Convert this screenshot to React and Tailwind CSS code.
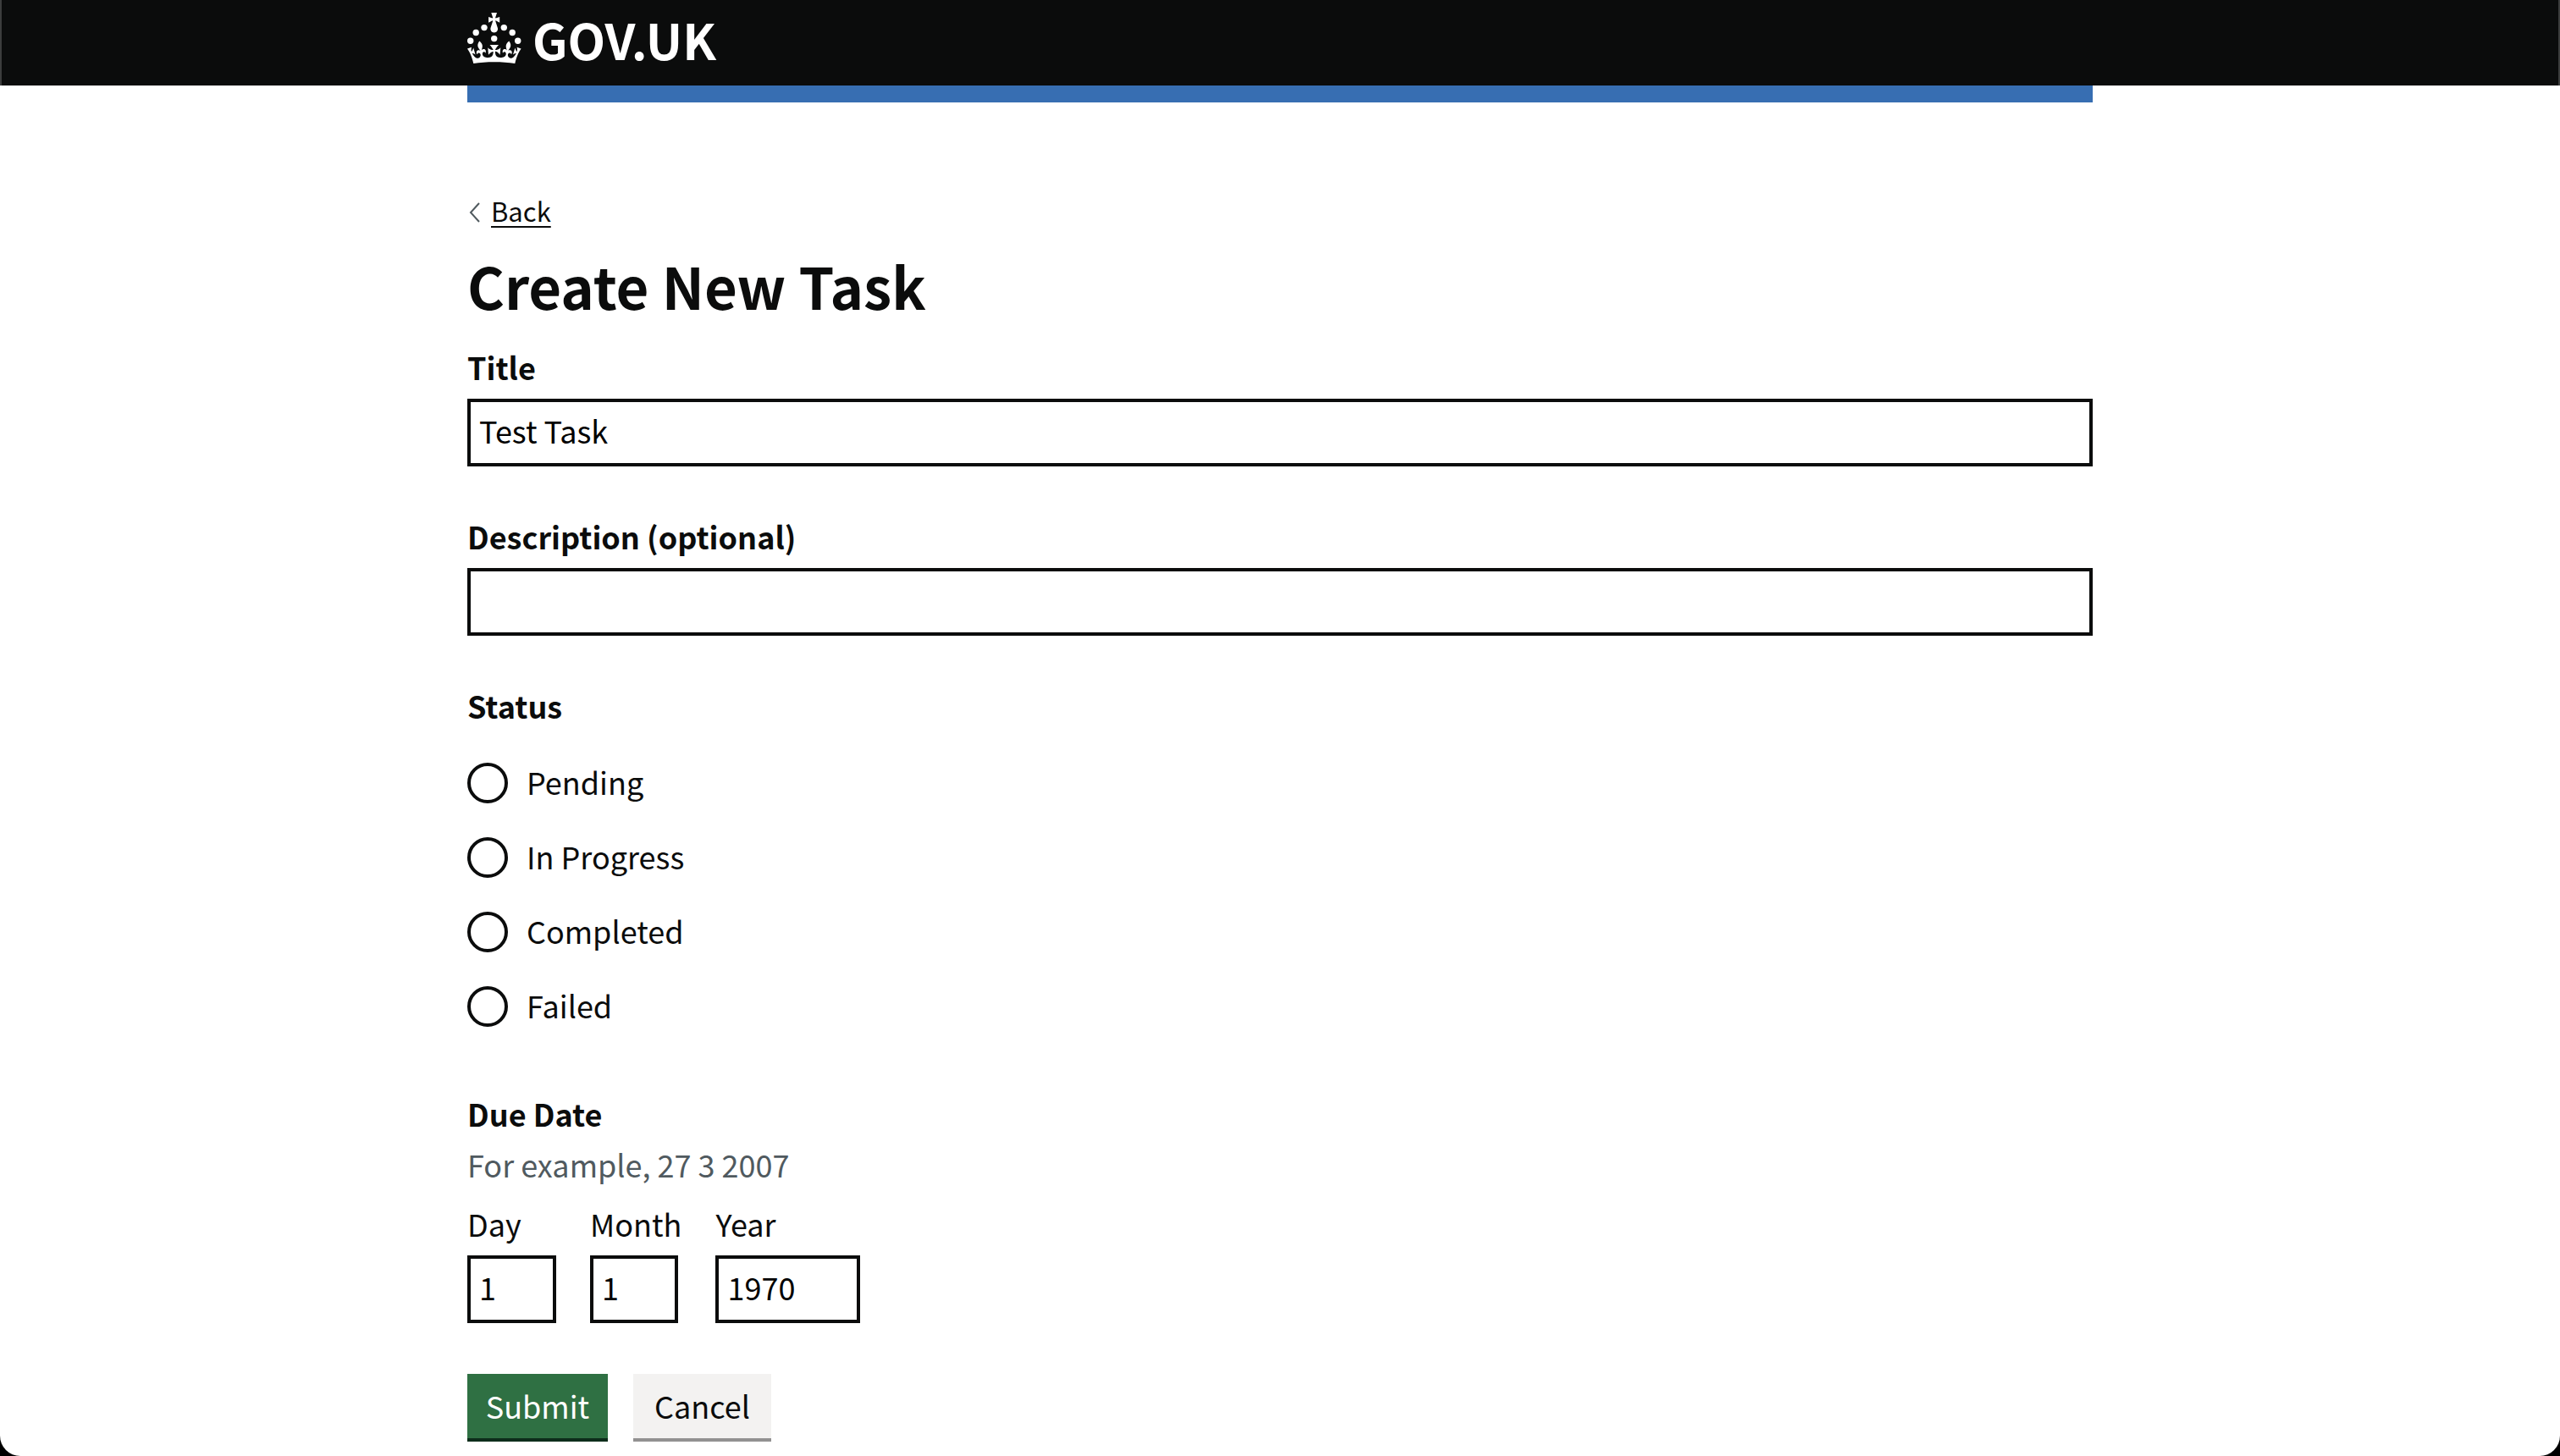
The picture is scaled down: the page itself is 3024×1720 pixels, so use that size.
import React from "react";

const STATUSES = ["Pending", "In Progress", "Completed", "Failed"];

const DATE_PARTS = [
  { id: "day", label: "Day", value: "1", width: "w-[105px]" },
  { id: "month", label: "Month", value: "1", width: "w-[104px]" },
  { id: "year", label: "Year", value: "1970", width: "w-[171px]" },
];

const inputClass =
  "block h-20 appearance-none rounded-none border-4 border-[#0b0c0c] bg-white px-2.5 pb-1.5 text-[36px] text-black outline-none focus:ring-4 focus:ring-[#ffdd00]";

const headingClass = "block text-[36px] leading-[50px] font-bold";

function Crown() {
  return (
    <svg viewBox="0 0 64 60" className="h-15 w-16 shrink-0 fill-white" aria-hidden="true">
      <circle cx="20" cy="17.6" r="3.7" />
      <circle cx="10.2" cy="23.5" r="3.7" />
      <circle cx="3.7" cy="33.2" r="3.7" />
      <circle cx="31.7" cy="30.6" r="3.7" />
      <circle cx="43.3" cy="17.6" r="3.7" />
      <circle cx="53.2" cy="23.5" r="3.7" />
      <circle cx="59.7" cy="33.2" r="3.7" />
      <path d="M33.1,9.8c.2-.1.3-.3.5-.5l4.6,2.4v-6.8l-4.6,1.5c-.1-.2-.3-.3-.5-.5l1.9-5.9h-6.7l1.9,5.9c-.2.1-.3.3-.5.5l-4.6-1.5v6.8l4.6-2.4c.1.2.3.3.5.5l-2.6,8c-.9,2.8,1.2,5.7,4.1,5.7h0c3,0,5.1-2.9,4.1-5.7l-2.6-8ZM37,37.9s-3.4,3.8-4.1,6.1c2.2,0,4.2-.5,6.4-2.8l-.7,8.5c-2-2.8-4.4-4.1-5.7-3.8.1,3.1.5,6.7,5.8,7.2,3.7.3,6.7-1.5,7-3.8.4-2.6-2-4.3-3.7-1.6-1.4-4.5,2.4-6.1,4.9-3.2-1.9-4.5-1.8-7.7,2.4-10.9,3,4,2.6,7.3-1.2,11.1,2.4-1.3,6.2,0,4,4.6-1.2-2.8-3.7-2.2-4.2.2-.3,1.7.7,3.7,3,4.2,1.9.3,4.7-.9,7-5.9-1.3,0-2.4.7-3.9,1.7l2.4-8c.6,2.3,1.4,3.7,2.2,4.5.6-1.6.5-2.8,0-5.3l5,1.8c-2.6,3.6-5.2,8.7-7.3,17.5-7.4-1.1-15.7-1.7-24.5-1.7h0c-8.8,0-17.1.6-24.5,1.7-2.1-8.9-4.7-13.9-7.3-17.5l5-1.8c-.5,2.5-.6,3.7,0,5.3.8-.8,1.6-2.3,2.2-4.5l2.4,8c-1.5-1-2.6-1.7-3.9-1.7,2.3,5,5.2,6.2,7,5.9,2.3-.4,3.3-2.4,3-4.2-.5-2.4-3-3.1-4.2-.2-2.2-4.6,1.6-6,4-4.6-3.7-3.7-4.2-7.1-1.2-11.1,4.2,3.2,4.3,6.4,2.4,10.9,2.5-2.8,6.3-1.3,4.9,3.2-1.8-2.7-4.1-1-3.7,1.6.3,2.3,3.3,4.1,7,3.8,5.4-.5,5.7-4.2,5.8-7.2-1.3-.2-3.7,1-5.7,3.8l-.7-8.5c2.2,2.3,4.2,2.7,6.4,2.8-.7-2.3-4.1-6.1-4.1-6.1h10.6,0Z" />
    </svg>
  );
}

function Header() {
  return (
    <header>
      <div className="border-x-2 border-[#3c3d3d] bg-[#0b0c0c]">
        <div className="mx-auto max-w-[1920px] pt-[15px] pb-6">
          <a href="#home" className="flex w-fit items-start gap-[13px] text-white">
            <Crown />
            <span className="text-[58px] leading-[62px] font-bold">GOV.UK</span>
          </a>
        </div>
      </div>
      <div className="mx-auto h-5 max-w-[1920px] bg-[#376eb2]" />
    </header>
  );
}

function TextField({ id, label, value }) {
  return (
    <div className="mb-[57px]">
      <label htmlFor={id} className={headingClass}>
        {label}
      </label>
      <input id={id} name={id} type="text" defaultValue={value} className={`${inputClass} mt-[13px] w-full`} />
    </div>
  );
}

export default function App() {
  return (
    <div className="bg-black">
      <div className="min-h-screen overflow-hidden rounded-b-3xl bg-white font-['Noto_Sans_CJK_SC','Noto_Sans',sans-serif] text-[#0b0c0c]">
        <Header />
        <main className="mx-auto max-w-[1920px] pt-[108px]">
          <a href="#back" className="flex w-fit items-center gap-[13px] text-[31px] leading-10">
            <svg
              viewBox="0 0 15 24"
              className="mt-1 h-6 w-[15px] fill-none stroke-[#505a5f] stroke-2"
              aria-hidden="true"
            >
              <path d="M14 1 L4 12 L14 23" />
            </svg>
            <span className="underline decoration-2 underline-offset-[5px] [text-decoration-skip-ink:none]">Back</span>
          </a>

          <h1 className="mt-7 mb-[31px] text-[67px] leading-20 font-bold">Create New Task</h1>

          <form onSubmit={(event) => event.preventDefault()}>
            <TextField id="title" label="Title" value="Test Task" />
            <TextField id="description" label="Description (optional)" value="" />

            <fieldset className="mb-[77px]">
              <legend className={headingClass}>Status</legend>
              <div className="mt-[43px] flex flex-col items-start gap-10">
                {STATUSES.map((status) => (
                  <label key={status} className="flex h-12 items-start gap-[22px] text-[36px] leading-[44px]">
                    <input
                      type="radio"
                      name="status"
                      value={status}
                      className="size-12 appearance-none rounded-full border-4 border-[#0b0c0c] bg-white checked:bg-[#0b0c0c] checked:ring-8 checked:ring-white checked:ring-inset"
                    />
                    {status}
                  </label>
                ))}
              </div>
            </fieldset>

            <fieldset className="mb-[60px]" aria-describedby="due-hint">
              <legend className={headingClass}>Due Date</legend>
              <p id="due-hint" className="mt-2.5 text-[36px] leading-[50px] text-[#505a5f]">
                For example, 27 3 2007
              </p>
              <div className="mt-5 flex gap-10">
                {DATE_PARTS.map((part) => (
                  <div key={part.id}>
                    <label htmlFor={part.id} className="block text-[36px] leading-[50px]">
                      {part.label}
                    </label>
                    <input
                      id={part.id}
                      name={part.id}
                      type="text"
                      inputMode="numeric"
                      defaultValue={part.value}
                      className={`${inputClass} mt-[13px] ${part.width}`}
                    />
                  </div>
                ))}
              </div>
            </fieldset>

            <div className="flex gap-[30px] pb-4 text-[36px] leading-[50px]">
              <button type="submit" className="w-[166px] border-b-4 border-[#0d2d1b] bg-[#2f7043] pt-3 pb-3.5 text-white">
                Submit
              </button>
              <button type="button" className="w-[163px] border-b-4 border-[#929191] bg-[#f3f2f1] pt-3 pb-3.5">
                Cancel
              </button>
            </div>
          </form>
        </main>
      </div>
    </div>
  );
}
